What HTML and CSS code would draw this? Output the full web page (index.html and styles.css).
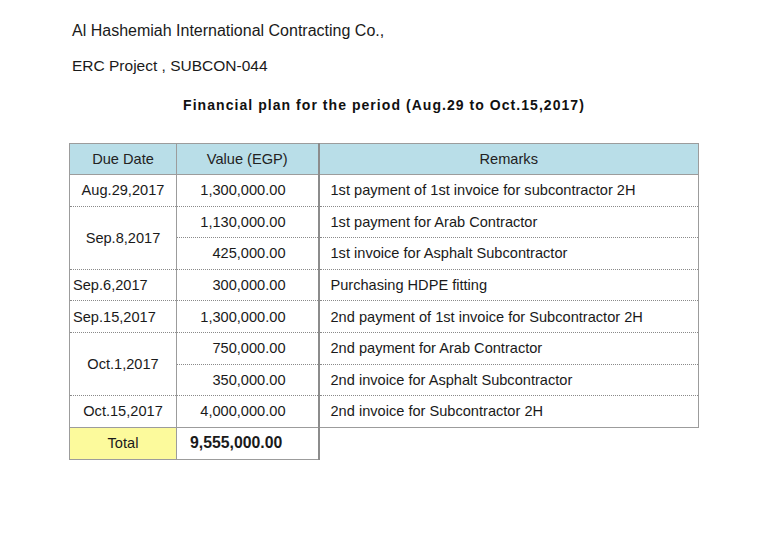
FILE: index.html
```html
<!DOCTYPE html>
<html>
<head>
<meta charset="utf-8">
<link rel="stylesheet" href="styles.css">
</head>
<body>
<div class="page">
  <p class="company">Al Hashemiah International Contracting Co.,</p>
  <p class="project">ERC Project , SUBCON-044</p>
  <h1 class="title">Financial plan for the period (Aug.29 to Oct.15,2017)</h1>
  <table class="plan">
    <colgroup>
      <col class="c-date">
      <col class="c-val">
      <col class="c-rem">
    </colgroup>
    <thead>
      <tr class="head">
        <th class="date">Due Date</th>
        <th class="val-h">Value (EGP)</th>
        <th class="rem-h">Remarks</th>
      </tr>
    </thead>
    <tbody>
      <tr>
        <td class="date">Aug.29,2017</td>
        <td class="val">1,300,000.00</td>
        <td class="rem">1st payment of 1st invoice for subcontractor 2H</td>
      </tr>
      <tr>
        <td class="date" rowspan="2">Sep.8,2017</td>
        <td class="val">1,130,000.00</td>
        <td class="rem">1st payment for Arab Contractor</td>
      </tr>
      <tr>
        <td class="val">425,000.00</td>
        <td class="rem">1st invoice for Asphalt Subcontractor</td>
      </tr>
      <tr>
        <td class="date left">Sep.6,2017</td>
        <td class="val">300,000.00</td>
        <td class="rem">Purchasing HDPE fitting</td>
      </tr>
      <tr>
        <td class="date left">Sep.15,2017</td>
        <td class="val">1,300,000.00</td>
        <td class="rem">2nd payment of 1st invoice for Subcontractor 2H</td>
      </tr>
      <tr>
        <td class="date" rowspan="2">Oct.1,2017</td>
        <td class="val">750,000.00</td>
        <td class="rem">2nd payment for Arab Contractor</td>
      </tr>
      <tr>
        <td class="val">350,000.00</td>
        <td class="rem">2nd invoice for Asphalt Subcontractor</td>
      </tr>
      <tr class="last">
        <td class="date">Oct.15,2017</td>
        <td class="val">4,000,000.00</td>
        <td class="rem">2nd invoice for Subcontractor 2H</td>
      </tr>
      <tr class="total">
        <td class="total-label">Total</td>
        <td class="total-val">9,555,000.00</td>
        <td class="empty"></td>
      </tr>
    </tbody>
  </table>
</div>
</body>
</html>
```

FILE: styles.css
```css
html, body {
  margin: 0;
  padding: 0;
  background: #ffffff;
}

body {
  font-family: "Liberation Sans", Arial, sans-serif;
  color: #1a1a1a;
}

.page {
  width: 768px;
  height: 543px;
  padding-top: 21px;
  box-sizing: border-box;
}

.company {
  margin: 0 0 15px 72px;
  font-size: 16px;
  line-height: 20px;
}

.project {
  margin: 0 0 19px 72px;
  font-size: 15.5px;
  line-height: 20px;
}

.title {
  margin: 0 0 28px 0;
  text-align: center;
  font-size: 14px;
  line-height: 20px;
  font-weight: bold;
  letter-spacing: 1.05px;
  color: #111;
}

.plan {
  margin-left: 69px;
  border-collapse: collapse;
  table-layout: fixed;
  width: 629px;
  font-size: 14.6px;
}

.c-date { width: 107px; }
.c-val { width: 142px; }
.c-rem { width: 380px; }

.plan th,
.plan td {
  padding: 0;
  vertical-align: middle;
  white-space: nowrap;
  border-left: 1px solid #9c9c9c;
  border-right: 1px solid #9c9c9c;
  border-top: 1px dotted #8a8a8a;
  border-bottom: 1px dotted #8a8a8a;
}

.plan .head th {
  height: 30px;
  background: #b9dee8;
  font-weight: normal;
  border-top: 1px solid #9c9c9c;
  border-bottom: 1px solid #9c9c9c;
  text-align: center;
  color: #222;
}

.plan td {
  height: 30.6px;
}

.plan .val-h,
.plan .val,
.plan .total-val {
  border-right: 2px solid #8c8c8c;
}

.plan .date {
  text-align: center;
}

.plan .left {
  text-align: left;
  padding-left: 3px;
}

.plan .val {
  text-align: right;
  padding-right: 32px;
}

.plan .rem {
  text-align: left;
  padding-left: 11px;
}

.plan .last td {
  border-bottom: 1px solid #9c9c9c;
}

.plan .total td {
  height: 31px;
}

.plan .total-label {
  background: #fcfa9c;
  text-align: center;
  border: 1px solid #9c9c9c;
}

.plan .total-val {
  font-weight: bold;
  font-size: 15.8px;
  text-align: left;
  padding-left: 13px;
  border-top: 1px solid #9c9c9c;
  border-bottom: 1px solid #9c9c9c;
  border-left: 1px solid #9c9c9c;
}

.plan .empty {
  border-top: 1px solid #9c9c9c;
  border-left: none;
  border-right: none;
  border-bottom: none;
}
```
